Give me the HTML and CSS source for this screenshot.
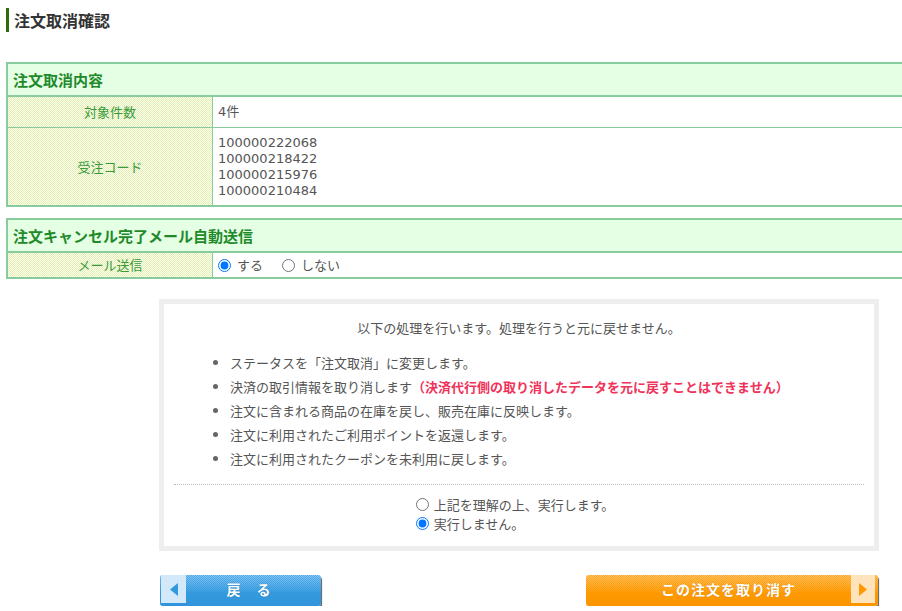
FILE: index.html
```html
<!DOCTYPE html>
<html lang="ja">
<head>
<meta charset="utf-8">
<title>注文取消確認</title>
<link rel="stylesheet" href="styles.css">
</head>
<body>
<div class="page">
  <h1 class="page-title">注文取消確認</h1>

  <table class="info-table first">
    <colgroup><col class="col-label"><col></colgroup>
    <tr><th colspan="2" class="sec-head">注文取消内容</th></tr>
    <tr class="row-short">
      <td class="label">対象件数</td>
      <td class="value">4件</td>
    </tr>
    <tr class="row-last">
      <td class="label">受注コード</td>
      <td class="value codes">100000222068<br>100000218422<br>100000215976<br>100000210484</td>
    </tr>
  </table>

  <table class="info-table second">
    <colgroup><col class="col-label"><col></colgroup>
    <tr><th colspan="2" class="sec-head">注文キャンセル完了メール自動送信</th></tr>
    <tr class="row-last row-radio">
      <td class="label">メール送信</td>
      <td class="value">
        <label class="opt"><input type="radio" name="mail" checked>する</label>
        <label class="opt"><input type="radio" name="mail">しない</label>
      </td>
    </tr>
  </table>

  <div class="confirm-box">
    <p class="lead">以下の処理を行います。処理を行うと元に戻せません。</p>
    <ul class="steps">
      <li>ステータスを「注文取消」に変更します。</li>
      <li>決済の取引情報を取り消します<span class="warn">（決済代行側の取り消したデータを元に戻すことはできません）</span></li>
      <li>注文に含まれる商品の在庫を戻し、販売在庫に反映します。</li>
      <li>注文に利用されたご利用ポイントを返還します。</li>
      <li>注文に利用されたクーポンを未利用に戻します。</li>
    </ul>
    <div class="agree">
      <div class="agree-inner">
        <label class="agree-opt"><input type="radio" name="exec">上記を理解の上、実行します。</label>
        <label class="agree-opt"><input type="radio" name="exec" checked>実行しません。</label>
      </div>
    </div>
  </div>

  <div class="actions">
    <button class="btn btn-back" type="button">
      <span class="btn-arrow"><svg width="8" height="13" viewBox="0 0 8 13"><polygon points="8,0 8,13 0,6.5" fill="#3399dd"/></svg></span>
      <span class="btn-label">戻　る</span>
    </button>
    <button class="btn btn-cancel" type="button">
      <span class="btn-label">この注文を取り消す</span>
      <span class="btn-arrow"><svg width="8" height="13" viewBox="0 0 8 13"><polygon points="0,0 0,13 8,6.5" fill="#ff9900"/></svg></span>
    </button>
  </div>
</div>
</body>
</html>
```

FILE: styles.css
```css
html, body {
  margin: 0;
  padding: 0;
  background: #fff;
  overflow-x: hidden;
}
body {
  font-family: "DejaVu Sans", "Noto Sans CJK JP", sans-serif;
  font-size: 13px;
  color: #555;
}
.page {
  width: 1026px;
  padding: 8px 0 0 6px;
}
.page-title {
  margin: 0;
  border-left: 3px solid #2e6b0a;
  padding-left: 5px;
  font-family: "Noto Sans CJK JP", sans-serif;
  font-size: 16px;
  line-height: 24px;
  font-weight: bold;
  color: #333;
}
.info-table {
  width: 1026px;
  border-collapse: separate;
  border-spacing: 0;
  border: 2px solid #88cc9e;
  table-layout: fixed;
}
.col-label { width: 205px; }
.info-table.first { margin-top: 30px; }
.info-table.second { margin-top: 11px; }
.sec-head {
  background: #e5ffe5;
  text-align: left;
  padding: 0 5px;
  height: 31px;
  line-height: 31px;
  border-bottom: 2px solid #88cc9e;
  font-family: "Noto Sans CJK JP", sans-serif;
  font-size: 15px;
  font-weight: bold;
  color: #1f8a2a;
}
.label {
  border-right: 1px solid #88cc9e;
  text-align: center;
  vertical-align: middle;
  color: #3a9a3a;
  font-family: "Noto Sans CJK JP", sans-serif;
  background-color: #fff;
  background-image: url("data:image/svg+xml,%3Csvg xmlns='http://www.w3.org/2000/svg' width='2' height='2' shape-rendering='crispEdges'%3E%3Crect width='1' height='1' fill='%23e0f1a6'/%3E%3Crect x='1' y='1' width='1' height='1' fill='%23e0f1a6'/%3E%3C/svg%3E");
  background-size: 2px 2px;
  padding: 0;
}
.value {
  padding: 0 5px;
  text-align: left;
  vertical-align: middle;
}
.row-short td {
  height: 30px;
  line-height: 30px;
  border-bottom: 1px solid #88cc9e;
  padding-top: 0;
  padding-bottom: 0;
}
.row-short .value { padding: 0 5px; }
.codes {
  line-height: 16px;
  padding: 7px 5px 6px;
}
.row-radio td {
  height: 24px;
  line-height: 24px;
  padding-top: 0;
  padding-bottom: 0;
}
.row-radio .value {
  display: flex;
  align-items: center;
  height: 24px;
}
.opt {
  display: flex;
  align-items: center;
  height: 24px;
  line-height: 24px;
  margin-right: 19px;
  font-family: "Noto Sans CJK JP", sans-serif;
}
.opt input {
  margin: 0 6px 0 0;
  width: 13px;
  height: 13px;
}
.confirm-box {
  box-sizing: border-box;
  width: 720px;
  margin: 20px auto 0;
  border: 5px solid #eeeeee;
  padding: 12px 10px 13px;
  font-family: "Noto Sans CJK JP", sans-serif;
}
.lead {
  margin: 0;
  text-align: center;
  line-height: 24px;
}
.steps {
  margin: 11px 0 0;
  padding-left: 56px;
  line-height: 24px;
}
.steps li::marker { color: #666; }
.warn {
  color: #f0335a;
  font-weight: bold;
}
.agree {
  margin-top: 13px;
  border-top: 1px dotted #bbb;
  padding-top: 10px;
  text-align: center;
}
.agree-inner {
  display: inline-flex;
  flex-direction: column;
  align-items: flex-start;
  text-align: left;
  padding-right: 8px;
}
.agree-opt {
  display: flex;
  align-items: center;
  line-height: 19px;
}
.agree-opt input {
  margin: 0 5px 0 0;
  width: 13px;
  height: 13px;
}
.actions {
  box-sizing: border-box;
  width: 720px;
  margin: 24px auto 0;
  padding: 0 1px;
  display: flex;
  justify-content: space-between;
}
.btn {
  position: relative;
  display: flex;
  align-items: center;
  height: 31px;
  padding: 0 3px 3px 1px;
  border: 0;
  border-radius: 3px;
  box-shadow: 1px 2px 1px rgba(40, 40, 40, 0.75);
  color: #fff;
  font-family: "Noto Sans CJK JP", sans-serif;
  font-size: 14px;
  font-weight: bold;
  cursor: pointer;
  overflow: hidden;
}
.btn::before {
  content: "";
  position: absolute;
  left: 0;
  top: 0;
  right: 0;
  height: 60%;
  background: url("data:image/svg+xml,%3Csvg xmlns='http://www.w3.org/2000/svg' width='2' height='2' shape-rendering='crispEdges'%3E%3Crect width='1' height='1' fill='white' fill-opacity='0.35'/%3E%3Crect x='1' y='1' width='1' height='1' fill='white' fill-opacity='0.35'/%3E%3C/svg%3E");
  background-size: 2px 2px;
  -webkit-mask-image: linear-gradient(#000, transparent);
  mask-image: linear-gradient(#000, transparent);
  pointer-events: none;
}
.btn-back {
  width: 161px;
  background: linear-gradient(#4eaaec, #3399dd 60%, #3194da);
}
.btn-cancel {
  width: 292px;
  padding: 0 3px 3px 0;
  background: linear-gradient(#ffa722, #ff9900 60%, #fb9500);
}
.btn-arrow {
  position: relative;
  z-index: 1;
  display: flex;
  align-items: center;
  justify-content: center;
  width: 25px;
  height: 28px;
  align-self: flex-start;
}
.btn-back .btn-arrow { background: #d3e8f9; }
.btn-cancel .btn-arrow { background: #ffe3bd; width: 24px; }
.btn-label {
  position: relative;
  z-index: 1;
  flex: 1;
  text-align: center;
  letter-spacing: 1px;
  text-shadow: 0 0 1px rgba(0,0,0,0.25);
}
.btn-back .btn-label { padding-right: 6px; }
.btn-cancel .btn-label { padding-left: 20px; }
```
